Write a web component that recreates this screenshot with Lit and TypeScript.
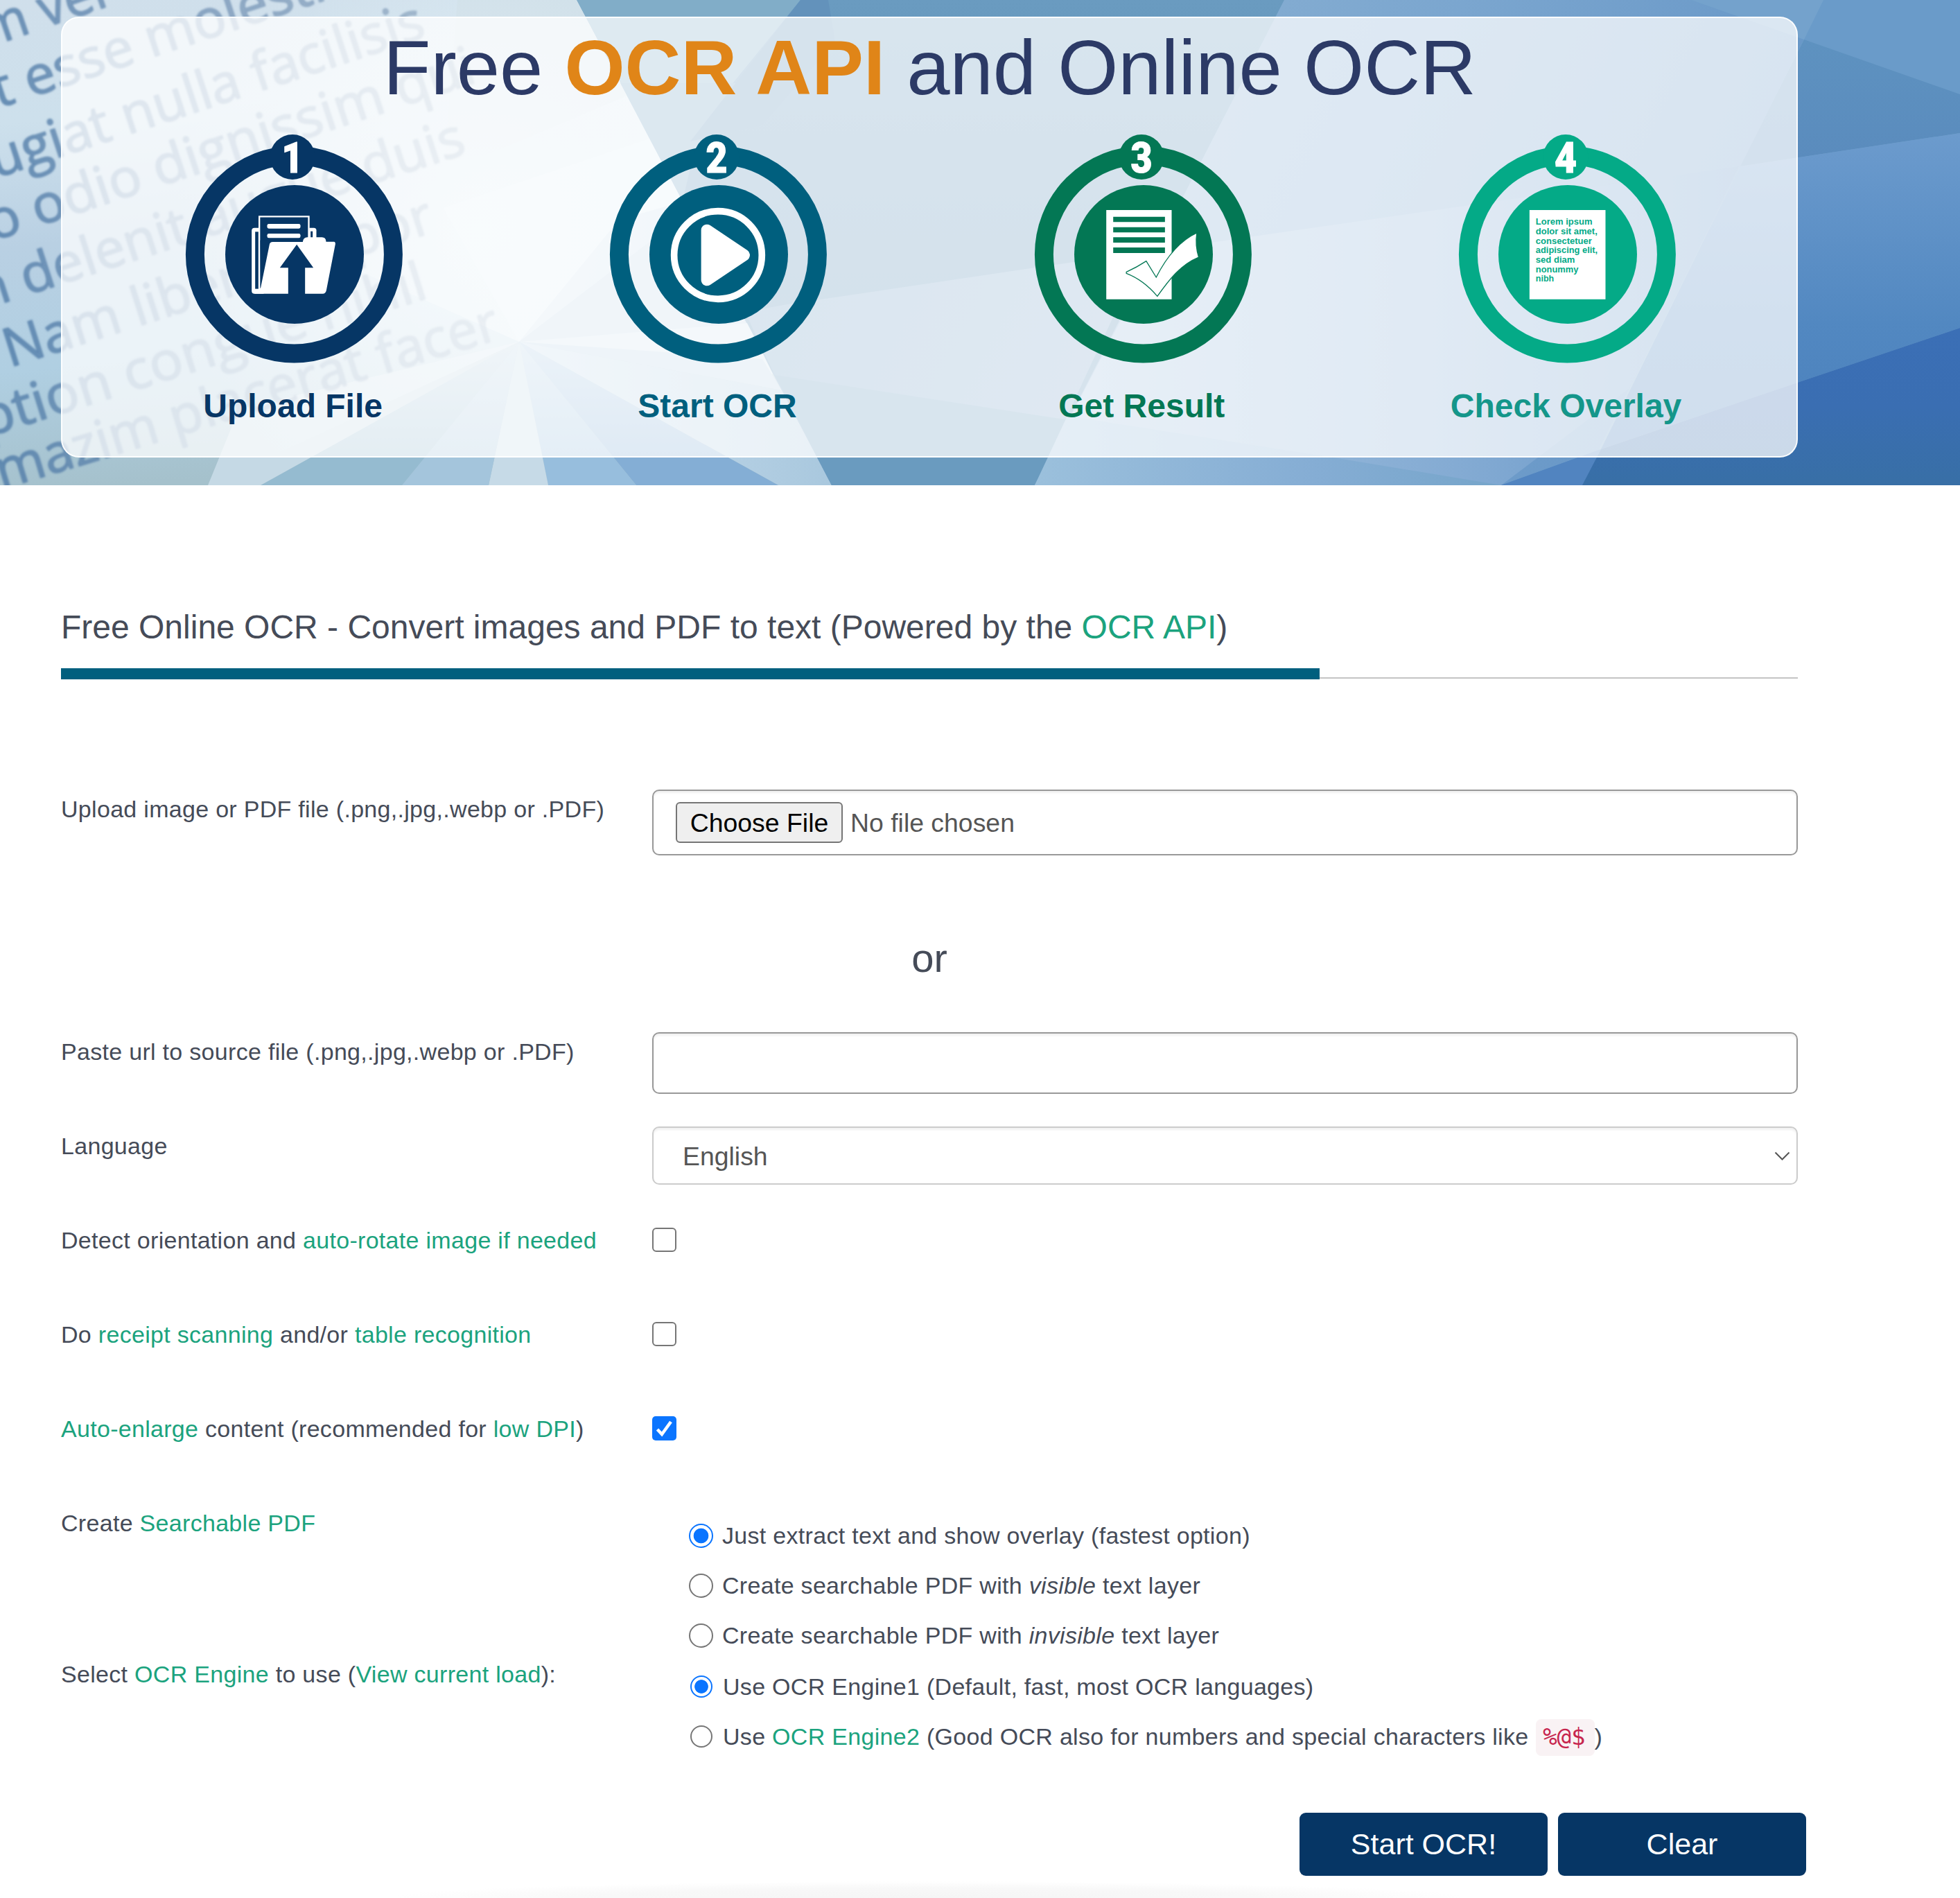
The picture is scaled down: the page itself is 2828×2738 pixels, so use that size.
import { LitElement, html, svg, css } from "lit";
import { customElement } from "lit/decorators.js";

interface Facet {
  points: string;
  fill: string;
}

// Translucent facets of the hero backdrop, painted back to front.
const FACETS: Facet[] = [
  { points: "0,0 832,0 1200,700 0,700", fill: "url(#gLeft)" },
  { points: "460,0 650,0 832,0 937,200 749,493 380,330", fill: "url(#gBright)" },
  { points: "660,0 832,0 905,138 640,250", fill: "#cfdfe8" },
  { points: "937,200 993,306 749,493 640,300", fill: "#dfedf5" },
  { points: "749,493 893,317 985,291 1080,472", fill: "#c3d8e9" },
  { points: "749,493 1080,466 1115,540", fill: "#d3e4ef" },
  { points: "749,493 1100,518 1128,563", fill: "#bdd5e6" },
  { points: "749,493 1128,563 1200,700 1123,700", fill: "url(#gPale)" },
  { points: "749,493 1123,700 918,700", fill: "url(#gRayA)" },
  { points: "749,493 918,700 791,700", fill: "url(#gRayB)" },
  { points: "749,493 791,700 705,700", fill: "#c6dae7" },
  { points: "749,493 705,700 580,700", fill: "url(#gRayC)" },
  { points: "749,493 580,700 376,700", fill: "url(#gRayD)" },
  { points: "749,493 376,700 300,700 345,590", fill: "#c5d9e5" },
  { points: "832,0 1155,0 960,240", fill: "#81adc8" },
  { points: "1155,0 1853,0 1493,700 1200,700 960,240", fill: "url(#gMid)" },
  { points: "895,120 1085,120 1000,225 985,290", fill: "#78a5c6" },
  { points: "1155,0 1195,0 1205,60 1100,180 996,204", fill: "#6392bb" },
  { points: "1136,439 1650,363 1493,700 1200,700 1128,563 1075,450", fill: "url(#gMidLow)" },
  { points: "1118,541 1556,608 1493,700 1200,700", fill: "#6a9bbf" },
  { points: "1853,0 2631,0 2281,700 1493,700", fill: "url(#gRight)" },
  { points: "1670,361 2509,240 2351,560 2166,700 1493,700", fill: "url(#gRightLow)" },
  { points: "1540,600 1930,661 2166,700 1493,700", fill: "url(#gStrip)" },
  { points: "2440,0 2828,0 2828,136", fill: "#6a9bc9" },
  { points: "2440,0 2631,0 2603,57", fill: "#74a2cc" },
  { points: "2603,57 2828,136 2828,192 2511,240", fill: "url(#gEdge)" },
  { points: "2511,240 2828,192 2828,473 2593,552 2310,648", fill: "url(#gEdgeLow)" },
  { points: "2330,611 2310,648 2166,700 2281,700", fill: "#5487c2" },
  { points: "2828,473 2593,552 2310,648 2281,700 2828,700", fill: "url(#gDeep)" },
  { points: "2310,648 2166,700 2283,700", fill: "#5184c0" },
];

interface BackdropLine {
  text: string;
  x: number;
  y: number;
  length: number;
  angle: number;
}

const BACKDROP_LINES: BackdropLine[] = [
  { text: "m ver", x: -19, y: 69, length: 199, angle: -19 },
  { text: "t esse molestie", x: -2, y: 156, length: 545, angle: -18.3 },
  { text: "ugiat nulla facilisis", x: -6, y: 257, length: 656, angle: -18.2 },
  { text: "o odio dignissim qui", x: -10, y: 348, length: 737, angle: -18.2 },
  { text: "n delenit augue duis", x: -26, y: 447, length: 737, angle: -17.9 },
  { text: "Nam liber tempor", x: 14, y: 530, length: 646, angle: -17.7 },
  { text: "ption congue nihil", x: -20, y: 631, length: 671, angle: -17.5 },
  { text: "mazim placerat facer", x: 2, y: 706, length: 755, angle: -16.8 },
];

const uploadGlyph = (c: string) => svg`
  <g transform="translate(-174.5 -187) scale(.33333)">
    <path fill="#fff" d="M341 458q0-12 12-12h40v285h-40q-12 0-12-12z"/>
    <path fill=${c} d="M356 463h14v247h-14z"/>
    <path fill="#fff" d="M590 446h20q11 0 11 11v40h-31z"/>
    <path fill=${c} d="M596 461h9v30h-9z"/>
    <path fill=${c} stroke="#fff" stroke-width="7" d="M374 720V397H588V560"/>
    <path fill=${c} d="M378 500h206v100H400L380 720z"/>
    <rect x="408" y="429" width="144" height="20" rx="7" fill="#fff"/>
    <rect x="408" y="471" width="144" height="19" rx="7" fill="#fff"/>
    <path fill="#fff" d="M352 731L380 705L418 518Q420 507 432 507H562Q564 488 582 487H645Q662 487 663 506H697Q704 507 703 517L664 717Q661 731 648 731Z"/>
    <path fill=${c} d="M536 518L608 619H572V732H499V619H463Z"/>
  </g>`;

const playGlyph = () => svg`
  <g transform="translate(-176.7 -187) scale(.33333)" fill="#fff">
    <circle cx="530" cy="564" r="190" fill="none" stroke="#fff" stroke-width="29"/>
    <path stroke="#fff" stroke-width="50" stroke-linejoin="round" d="M482 456L643 564L482 672Z"/>
  </g>`;

const resultGlyph = (c: string) => svg`
  <g transform="translate(-178.8 -187) scale(.33333)">
    <path fill="#fff" d="M378 369h283v386H378z"/>
    <path fill=${c} d="M408 398h224v23H408zM408 443h224v23H408zM408 487h224v23H408zM408 531h224v24H408z"/>
    <path fill="#fff" stroke=${c} stroke-width="4" d="M465 637Q512 616 551 590L594 660C640 570 700 500 770 468Q762 522 778 573C700 605 650 670 599 742Q540 672 465 643Z"/>
  </g>`;

const LOREM: [string, number, number][] = [
  ["Lorem ipsum", 433, 245],
  ["dolor sit amet,", 474, 267],
  ["consectetuer", 516, 243],
  ["adipiscing elit,", 556, 268],
  ["sed diam", 597, 170],
  ["nonummy", 638, 185],
  ["nibh", 677, 79],
];

const overlayGlyph = (c: string) => svg`
  <g transform="translate(-181.5 -187) scale(.33333)">
    <path fill="#fff" d="M382 369h329v386H382z"/>
    ${LOREM.map(
      ([t, y, w]) => svg`<text class="lorem" x="409" y=${y} textLength=${w} lengthAdjust="spacingAndGlyphs" fill=${c}>${t}</text>`
    )}
  </g>`;

interface Step {
  n: string;
  width: number;
  label: string;
  color: string;
  ink: string;
  glyph: (c: string) => unknown;
}

const STEPS: Step[] = [
  { n: "1", width: 31, label: "Upload File", color: "#063665", ink: "#063665", glyph: uploadGlyph },
  { n: "2", width: 31, label: "Start OCR", color: "#005f7e", ink: "#005f7e", glyph: playGlyph },
  { n: "3", width: 31, label: "Get Result", color: "#037754", ink: "#037754", glyph: resultGlyph },
  { n: "4", width: 32, label: "Check Overlay", color: "#04aa87", ink: "#14968a", glyph: overlayGlyph },
];

@customElement("ocr-hero")
class OcrHero extends LitElement {
  static styles = css`
    :host {
      display: block;
      position: relative;
      height: 700px;
      overflow: hidden;
      box-sizing: border-box;
      padding: 24px 234px 40px 88px;
    }
    .backdrop {
      position: absolute;
      inset: 0;
      width: 2828px;
      height: 700px;
    }
    .backdrop text {
      font-family: "Open Sans", sans-serif;
      font-size: 77px;
    }
    .card {
      position: relative;
      box-sizing: border-box;
      height: 636px;
      border: 2px solid rgba(255, 255, 255, 0.9);
      border-radius: 26px;
      background: rgba(255, 255, 255, 0.74);
      padding: 12px 25px 0 28px;
    }
    .title {
      margin: 0;
      padding-right: 2px;
      font-weight: 400;
      font-size: 112px;
      line-height: 120px;
      text-align: center;
      color: #2c3a66;
      white-space: nowrap;
    }
    .accent {
      font-weight: 700;
      color: #e08518;
    }
    .steps {
      display: grid;
      grid-template-columns: repeat(4, 612.3px);
      margin-top: 33px;
    }
    .step {
      display: flex;
      flex-direction: column;
      align-items: center;
      gap: 27px;
    }
    .icon {
      display: block;
      width: 320px;
      height: 340px;
    }
    .digit {
      font-family: Roboto, "Liberation Sans", sans-serif;
      font-weight: 900;
      font-size: 61px;
    }
    .lorem {
      font-family: "Liberation Sans", sans-serif;
      font-weight: 700;
      font-size: 39px;
    }
    .caption {
      padding-right: 3px;
      font-weight: 700;
      font-size: 48px;
      line-height: 56px;
      white-space: nowrap;
    }
  `;

  render() {
    return html`
      <svg class="backdrop" viewBox="0 0 2828 700" preserveAspectRatio="none" aria-hidden="true">
        <defs>
          <linearGradient id="gLeft" x1="0" y1="0" x2="0.15" y2="1">
            <stop offset="0" stop-color="#d0dfeb" />
            <stop offset=".25" stop-color="#cde0ec" />
            <stop offset=".5" stop-color="#b9d0e3" />
            <stop offset=".75" stop-color="#b0cfe2" />
            <stop offset="1" stop-color="#a5c1cc" />
          </linearGradient>
          <linearGradient id="gBright" x1="0" y1="0" x2="1" y2=".6">
            <stop offset="0" stop-color="#d2e3ee" stop-opacity="0" />
            <stop offset="1" stop-color="#dcebf2" />
          </linearGradient>
          <radialGradient id="gGlow" cx="690" cy="330" r="440" gradientUnits="userSpaceOnUse">
            <stop offset="0" stop-color="#e6f2f8" stop-opacity=".8" />
            <stop offset="1" stop-color="#e0edf4" stop-opacity="0" />
          </radialGradient>
          <linearGradient id="gRayA" x1="0" y1="0" x2="0" y2="1"><stop offset="0" stop-color="#b4d0e7" /><stop offset=".8" stop-color="#84aed5" /></linearGradient>
          <linearGradient id="gRayB" x1="0" y1="0" x2="0" y2="1"><stop offset="0" stop-color="#bfd7e9" /><stop offset=".8" stop-color="#97bedd" /></linearGradient>
          <linearGradient id="gRayC" x1="0" y1="0" x2="0" y2="1"><stop offset="0" stop-color="#c4d9e8" /><stop offset=".8" stop-color="#a4c5dc" /></linearGradient>
          <linearGradient id="gRayD" x1="0" y1="0" x2="0" y2="1"><stop offset="0" stop-color="#c4d8e6" /><stop offset=".8" stop-color="#95bbd0" /></linearGradient>
          <linearGradient id="gPale"><stop offset="0" stop-color="#c9dded" /><stop offset="1" stop-color="#a9c8de" /></linearGradient>
          <linearGradient id="gMid" x1="0" y1="0" x2="0" y2="1"><stop offset="0" stop-color="#6a9bc0" /><stop offset=".6" stop-color="#5b8eb5" /><stop offset="1" stop-color="#6799be" /></linearGradient>
          <linearGradient id="gMidLow" x1="0" y1="0" x2="1" y2=".3"><stop offset="0" stop-color="#729fc4" /><stop offset="1" stop-color="#84a9cd" /></linearGradient>
          <linearGradient id="gRight" x1="0" y1="0" x2="1" y2=".3"><stop offset="0" stop-color="#8cb2d3" /><stop offset=".5" stop-color="#7ba6cf" /><stop offset="1" stop-color="#6595c6" /></linearGradient>
          <linearGradient id="gRightLow"><stop offset="0" stop-color="#a6c4e0" /><stop offset=".6" stop-color="#84abd3" /><stop offset="1" stop-color="#6394c6" /></linearGradient>
          <linearGradient id="gStrip"><stop offset="0" stop-color="#9bc0dc" /><stop offset=".6" stop-color="#85add4" /><stop offset="1" stop-color="#76a5ca" /></linearGradient>
          <linearGradient id="gEdge" x1="0" y1="0" x2="0" y2="1"><stop offset="0" stop-color="#5e92c0" /><stop offset="1" stop-color="#5a8bbd" /></linearGradient>
          <linearGradient id="gEdgeLow" x1="0" y1="0" x2="0" y2="1"><stop offset="0" stop-color="#6c9bcd" /><stop offset=".6" stop-color="#5288c1" /><stop offset="1" stop-color="#4a80bc" /></linearGradient>
          <linearGradient id="gDeep" x1="0" y1="0" x2="0" y2="1"><stop offset="0" stop-color="#3b6fb6" /><stop offset=".5" stop-color="#3a6eb2" /><stop offset="1" stop-color="#386fa6" /></linearGradient>
          <linearGradient id="gInk" gradientUnits="userSpaceOnUse" x1="0" y1="0" x2="760" y2="0">
            <stop offset="0" stop-color="#4f7ba8" stop-opacity=".8" />
            <stop offset=".35" stop-color="#5a7fa8" stop-opacity=".6" />
            <stop offset="1" stop-color="#6a86a6" stop-opacity=".4" />
          </linearGradient>
          <filter id="soft"><feGaussianBlur stdDeviation="1.6" /></filter>
        </defs>
        <rect width="2828" height="700" fill="#6f9fc8" />
        ${FACETS.map((f) => svg`<polygon points=${f.points} fill=${f.fill} />`)}
        <polygon points="0,0 832,0 993,306 749,493 300,700 0,700" fill="url(#gGlow)" />
        <g filter="url(#soft)" fill="url(#gInk)" stroke="url(#gInk)" stroke-width="1.6">
          ${BACKDROP_LINES.map(
            (l) => svg`<text x="0" y="0" textLength=${l.length} lengthAdjust="spacingAndGlyphs"
              transform="translate(${l.x} ${l.y}) rotate(${l.angle})">${l.text}</text>`
          )}
        </g>
      </svg>
      <div class="card">
        <h1 class="title">Free <span class="accent">OCR API</span> and Online OCR</h1>
        <div class="steps">
          ${STEPS.map(
            (s) => html`
              <div class="step">
                <svg class="icon" viewBox="-160 -176 320 340">
                  <circle cx=".4" r="143" fill="none" stroke=${s.color} stroke-width="27" />
                  <circle cx="1" r="100" fill=${s.color} />
                  <circle cx="-2" cy="-140.5" r="32.5" fill=${s.color} />
                  ${svg`<text class="digit" x=${-2 - s.width / 2} y="-118.5" textLength=${s.width}
                    lengthAdjust="spacingAndGlyphs" fill="#fff" stroke="#fff" stroke-width="1.2">${s.n}</text>`}
                  ${s.glyph(s.color)}
                </svg>
                <div class="caption" style="color:${s.ink}">${s.label}</div>
              </div>
            `
          )}
        </div>
      </div>
    `;
  }
}

@customElement("ocr-form")
class OcrForm extends LitElement {
  static styles = css`
    :host {
      display: block;
      box-sizing: border-box;
      padding: 177px 234px 0 88px;
      color: #454b58;
      font-size: 34px;
      line-height: 48px;
      letter-spacing: 0.3px;
    }
    .link {
      color: #1ba37e;
    }
    .heading {
      margin: 0 0 31px;
      font-weight: 400;
      font-size: 48px;
      line-height: 56px;
      letter-spacing: 0;
      white-space: nowrap;
    }
    .rule {
      display: flex;
      align-items: flex-end;
      height: 16px;
      margin-bottom: 159px;
    }
    .rule-bar {
      width: 1816px;
      height: 16px;
      background: #005f7e;
    }
    .rule-line {
      flex: 1;
      height: 2px;
      margin-bottom: 1px;
      background: #c4c4c4;
    }
    .row {
      display: grid;
      grid-template-columns: 853px 1fr;
      align-items: start;
      height: 136px;
    }
    .row.file {
      height: 95px;
    }
    .row.pdf {
      height: 218px;
    }
    .row.engine {
      height: 228px;
    }
    .label {
      padding-top: 4px;
      white-space: nowrap;
    }
    .box {
      box-sizing: border-box;
      display: flex;
      align-items: center;
      width: 100%;
      border: 2px solid #999;
      border-radius: 10px;
      background: #fff;
      box-shadow: inset 0 3px 3px rgba(0, 0, 0, 0.06);
      font-size: 37.4px;
      letter-spacing: 0;
      color: #555;
    }
    .box.picker {
      height: 95px;
      padding-left: 32px;
      gap: 11px;
    }
    .box.url {
      height: 89px;
      margin: 0;
      outline: none;
    }
    .box.select {
      height: 84px;
      border-color: #ccc;
      padding: 1px 9px 0 42px;
      justify-content: space-between;
    }
    .choose {
      box-sizing: border-box;
      width: 241px;
      height: 59px;
      border: 2px solid #767676;
      border-radius: 6px;
      background: #efefef;
      color: #000;
      text-align: center;
      font: inherit;
      line-height: 54px;
      padding: 0;
    }
    .chevron {
      width: 23px;
      height: 14px;
    }
    .or {
      height: 139px;
      padding-top: 116px;
      font-size: 58px;
      line-height: 64px;
      letter-spacing: 0;
      text-align: center;
    }
    .check,
    .radio {
      appearance: none;
      box-sizing: border-box;
      flex: none;
      width: 35px;
      height: 35px;
      margin: 0;
      border: 2.5px solid #767676;
      background: #fff;
    }
    .check {
      display: block;
      margin-top: 10px;
      border-radius: 6px;
    }
    .tick {
      display: block;
      width: 35px;
      height: 35px;
      margin-top: 10px;
    }
    .radio {
      border-radius: 50%;
    }
    .radio:checked {
      border-color: #0b75ff;
      background: radial-gradient(circle, #0b75ff 10.4px, #fff 11.2px);
    }
    .engine .radio {
      width: 32px;
      height: 32px;
      margin: 0 1.5px;
    }
    .engine .radio:checked {
      background: radial-gradient(circle, #0b75ff 9.4px, #fff 10.2px);
    }
    .options {
      padding: 10px 0 0 53px;
    }
    .option {
      display: flex;
      align-items: center;
      gap: 13px;
      height: 72px;
      white-space: nowrap;
    }
    .engine .option {
      gap: 14px;
    }
    .option.wide span {
      position: relative;
    }
    .option.wide > span {
      padding-top: 3px;
    }
    .code {
      display: inline-block;
      box-sizing: border-box;
      height: 53px;
      line-height: 51px;
      padding: 0 13px 0 10px;
      margin-left: 1px;
      border-radius: 8px;
      background: #f9f2f4;
      color: #c7254e;
      font-family: "DejaVu Sans Mono", "Liberation Mono", monospace;
      font-size: 34px;
      letter-spacing: 0;
    }
    .actions {
      display: flex;
      justify-content: flex-end;
      gap: 15px;
      margin-right: -12px;
    }
    .button {
      width: 358px;
      height: 91px;
      padding: 0;
      border: 0;
      border-radius: 9px;
      background: #063665;
      color: #fff;
      font: 43px/91px "Liberation Sans", Arial, sans-serif;
      padding-bottom: 2px;
    }
    .fade {
      height: 26px;
      margin-top: 6px;
      padding-right: 0;
      background: radial-gradient(780px 24px at 1253px 100%, #f5f5f5, #f8f8f8 60%, #fff);
    }
  `;

  render() {
    return html`
      <h2 class="heading">
        Free Online OCR - Convert images and PDF to text (Powered by the <span class="link">OCR API</span>)
      </h2>
      <div class="rule"><div class="rule-bar"></div><div class="rule-line"></div></div>

      <div class="row file">
        <div class="label">Upload image or PDF file (.png,.jpg,.webp or .PDF)</div>
        <div class="box picker"><button class="choose">Choose File</button><span>No file chosen</span></div>
      </div>
      <div class="or">or</div>
      <div class="row">
        <div class="label">Paste url to source file (.png,.jpg,.webp or .PDF)</div>
        <input class="box url" type="text" />
      </div>
      <div class="row">
        <div class="label">Language</div>
        <div class="box select">
          <span>English</span>
          <svg class="chevron" viewBox="0 0 23 14"><path d="M1.5 1.5L11.5 11.5L21.5 1.5" fill="none" stroke="#555" stroke-width="2" /></svg>
        </div>
      </div>
      <div class="row">
        <div class="label">Detect orientation and <span class="link">auto-rotate image if needed</span></div>
        <input class="check" type="checkbox" />
      </div>
      <div class="row">
        <div class="label">Do <span class="link">receipt scanning</span> and/or <span class="link">table recognition</span></div>
        <input class="check" type="checkbox" />
      </div>
      <div class="row">
        <div class="label"><span class="link">Auto-enlarge</span> content (recommended for <span class="link">low DPI</span>)</div>
        <svg class="tick" viewBox="0 0 35 35">
          <rect width="35" height="35" rx="5" fill="#0b75ff" />
          <path d="M7.5 19L14 26L27 8" fill="none" stroke="#fff" stroke-width="4.6" />
        </svg>
      </div>
      <div class="row pdf">
        <div class="label">Create <span class="link">Searchable PDF</span></div>
        <div class="options">
          <label class="option"><input class="radio" type="radio" name="pdf" checked /><span>Just extract text and show overlay (fastest option)</span></label>
          <label class="option"><input class="radio" type="radio" name="pdf" /><span>Create searchable PDF with <i>visible</i> text layer</span></label>
          <label class="option"><input class="radio" type="radio" name="pdf" /><span>Create searchable PDF with <i>invisible</i> text layer</span></label>
        </div>
      </div>
      <div class="row engine">
        <div class="label">Select <span class="link">OCR Engine</span> to use (<span class="link">View current load</span>):</div>
        <div class="options">
          <label class="option"><input class="radio" type="radio" name="engine" checked /><span>Use OCR Engine1 (Default, fast, most OCR languages)</span></label>
          <label class="option wide"><input class="radio" type="radio" name="engine" /><span>Use <span class="link">OCR Engine2</span> (Good OCR also for numbers and special characters like <span class="code">%@$</span>)</span></label>
        </div>
      </div>
      <div class="actions">
        <button class="button">Start OCR!</button>
        <button class="button">Clear</button>
      </div>
      <div class="fade"></div>
    `;
  }
}

@customElement("app-root")
class AppRoot extends LitElement {
  static styles = css`
    :host {
      display: block;
      width: 2828px;
      height: 2738px;
      overflow: hidden;
      background: #fff;
      font-family: "Liberation Sans", Arial, Helvetica, sans-serif;
    }
  `;

  render() {
    return html`<ocr-hero></ocr-hero><ocr-form></ocr-form>`;
  }
}
